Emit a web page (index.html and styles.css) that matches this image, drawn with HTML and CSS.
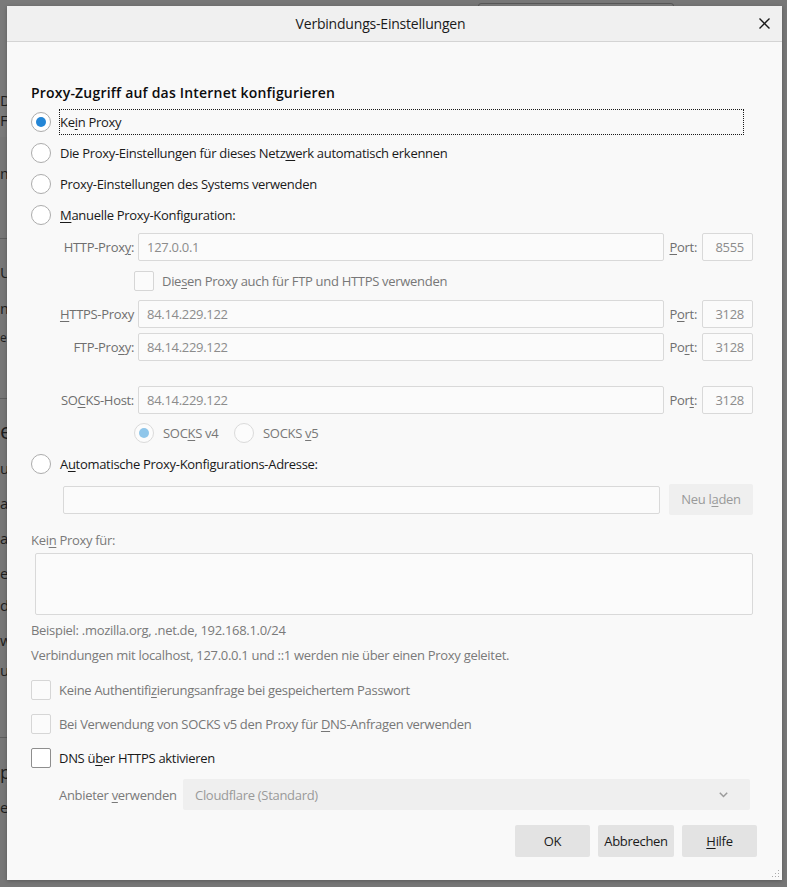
FILE: index.html
```html
<!DOCTYPE html>
<html lang="de">
<head>
<meta charset="utf-8">
<title>Verbindungs-Einstellungen</title>
<link rel="stylesheet" href="styles.css">
</head>
<body>
<div class="page-search"></div>
<div class="page">
  <div class="band">
    <div class="bl b-d">D</div>
    <div class="bl b-fi">Fi</div>
  </div>
  <div class="bl b-m">m</div>
  <div class="sep s2"></div>
  <div class="bl b-u">U</div>
  <div class="bl b-m2">m</div>
  <div class="bl small b-e">e</div>
  <div class="sep s3"></div>
  <div class="bl big b-e2">e</div>
  <div class="bl b-u2">u</div>
  <div class="bl b-ar">ar</div>
  <div class="bl b-a">a</div>
  <div class="bl b-ei">ei</div>
  <div class="bl b-dd">d</div>
  <div class="bl b-w">w</div>
  <div class="bl b-ur">ur</div>
  <div class="sep s4"></div>
  <div class="bl mid b-pj">pj</div>
  <div class="bl b-e3">e</div>
</div>

<div class="dialog">
  <div class="titlebar">
    <div class="title">Verbindungs-Einstellungen</div>
    <div class="close">
      <svg width="11" height="11" viewBox="0 0 11 11"><path d="M0.5 0.5 L10.5 10.5 M10.5 0.5 L0.5 10.5" stroke="#1a1a1a" stroke-width="1.4" fill="none"/></svg>
    </div>
  </div>
  <div class="body">
    <h1 class="heading">Proxy-Zugriff auf das Internet konfigurieren</h1>

    <div class="radio-row first"><span class="radio checked"></span><span class="rlabel focus">Ke<u>i</u>n Proxy</span></div>
    <div class="radio-row"><span class="radio"></span><span class="rlabel">Die Proxy-Einstellungen für dieses Netz<u>w</u>erk automatisch erkennen</span></div>
    <div class="radio-row"><span class="radio"></span><span class="rlabel">Proxy-Einstellungen des Systems verwenden</span></div>
    <div class="radio-row"><span class="radio"></span><span class="rlabel"><u>M</u>anuelle Proxy-Konfiguration:</span></div>

    <div class="proxy-row">
      <span class="plabel">HTTP-Prox<u>y</u>:</span>
      <div class="field">127.0.0.1</div>
      <span class="port-label"><u>P</u>ort:</span>
      <div class="field port">8555</div>
    </div>
    <div class="same-row">
      <span class="check disabled"></span>
      <span class="clabel gray">Die<u>s</u>en Proxy auch für FTP und HTTPS verwenden</span>
    </div>
    <div class="proxy-row">
      <span class="plabel"><u>H</u>TTPS-Proxy</span>
      <div class="field">84.14.229.122</div>
      <span class="port-label">P<u>o</u>rt:</span>
      <div class="field port">3128</div>
    </div>
    <div class="proxy-row">
      <span class="plabel">FTP-Pro<u>x</u>y:</span>
      <div class="field">84.14.229.122</div>
      <span class="port-label">Po<u>r</u>t:</span>
      <div class="field port">3128</div>
    </div>
    <div class="proxy-row socks">
      <span class="plabel">SO<u>C</u>KS-Host:</span>
      <div class="field">84.14.229.122</div>
      <span class="port-label">Por<u>t</u>:</span>
      <div class="field port">3128</div>
    </div>
    <div class="version-row">
      <span class="radio disabled checked"></span>
      <span class="vlabel">SOC<u>K</u>S v4</span>
      <span class="radio disabled"></span>
      <span class="vlabel">SOCKS <u>v</u>5</span>
    </div>

    <div class="radio-row"><span class="radio"></span><span class="rlabel">A<u>u</u>tomatische Proxy-Konfigurations-Adresse:</span></div>
    <div class="auto-row">
      <div class="field"></div>
      <div class="reload">Neu l<u>a</u>den</div>
    </div>

    <div class="noproxy-label">Kei<u>n</u> Proxy für:</div>
    <div class="textarea"></div>
    <div class="hint">Beispiel: .mozilla.org, .net.de, 192.168.1.0/24</div>
    <div class="hint">Verbindungen mit localhost, 127.0.0.1 und ::1 werden nie über einen Proxy geleitet.</div>

    <div class="check-row first"><span class="check disabled"></span><span class="clabel gray">Keine Authentifi<u>z</u>ierungsanfrage bei gespeichertem Passwort</span></div>
    <div class="check-row"><span class="check disabled"></span><span class="clabel gray">Bei Verwendung von SOCKS v5 den Proxy für <u>D</u>NS-Anfragen verwenden</span></div>
    <div class="check-row"><span class="check"></span><span class="clabel">DNS ü<u>b</u>er HTTPS aktivieren</span></div>

    <div class="select-row">
      <span class="slabel">Anbieter <u>v</u>erwenden</span>
      <div class="select">
        <span>Cloudflare (Standard)</span>
        <svg width="9" height="6" viewBox="0 0 9 6"><path d="M0.8 0.8 L4.5 4.5 L8.2 0.8" stroke="#9a9a9a" stroke-width="1.5" fill="none"/></svg>
      </div>
    </div>

    <div class="buttons">
      <div class="btn">OK</div>
      <div class="btn wide">Abbrechen</div>
      <div class="btn"><u>H</u>ilfe</div>
    </div>
  </div>
  <svg class="grip" width="9" height="9" viewBox="0 0 9 9">
    <rect x="7" y="1" width="1" height="1" fill="#aaa"/>
    <rect x="4" y="4" width="1" height="1" fill="#aaa"/>
    <rect x="7" y="4" width="1" height="1" fill="#aaa"/>
    <rect x="1" y="7" width="1" height="1" fill="#aaa"/>
    <rect x="4" y="7" width="1" height="1" fill="#aaa"/>
    <rect x="7" y="7" width="1" height="1" fill="#aaa"/>
  </svg>
</div>
</body>
</html>
```

FILE: styles.css
```css
* { box-sizing: border-box; }
html, body { margin: 0; padding: 0; }
body {
  width: 787px;
  height: 887px;
  overflow: hidden;
  position: relative;
  background: #777777;
  font-family: "Open Sans", "Noto Sans", sans-serif;
  font-size: 13px;
  letter-spacing: -0.3px;
  color: #1a1a1a;
}
u { text-decoration: underline; text-underline-offset: 2px; text-decoration-thickness: 1px; }

/* dimmed page behind the dialog (only its left edge is visible) */
.page { width: 40px; color: #1e1e1e; font-size: 15px; letter-spacing: 0; }
.page-search {
  position: absolute; left: 478px; top: 3px; width: 196px; height: 30px;
  border: 1px solid #585858; border-radius: 3px; background: #7c7c7c;
}
.band { background: #7a7a7a; padding-top: 65px; height: 137px; }
.band .b-d { margin-top: 25px; }
.bl { height: 20px; line-height: 20px; white-space: nowrap; }
.bl.small { font-size: 12px; }
.bl.big { font-size: 22px; height: 30px; line-height: 30px; }
.bl.mid { font-size: 18px; }
.sep { height: 1px; background: #5e5e5e; }
.b-m { margin-top: 26px; }
.s2 { margin-top: 55px; }
.b-u { margin-top: 23px; }
.b-m2 { margin-top: 16px; }
.b-e { margin-top: 10px; }
.s3 { margin-top: 50px; }
.b-e2 { margin-top: 16px; }
.b-u2 { margin-top: 13px; }
.b-ar { margin-top: 15px; }
.b-a { margin-top: 15px; }
.b-ei { margin-top: 15px; }
.b-dd { margin-top: 12px; }
.b-w { margin-top: 15px; }
.b-ur { margin-top: 10px; }
.s4 { margin-top: 57px; }
.b-pj { margin-top: 24px; }
.b-e3 { margin-top: 15px; }

/* dialog window */
.dialog {
  position: absolute; left: 7px; top: 6px; width: 775px; height: 874px;
  background: #f9f9f9;
  box-shadow: 0 1px 4px rgba(0,0,0,0.25);
}
.titlebar {
  height: 36px; background: #f0f0f0; border-bottom: 1px solid #d4d4d4;
  display: flex; align-items: center;
}
.title { flex: 1; text-align: center; font-size: 14px; letter-spacing: -0.2px; color: #1a1a1a; }
.close { width: 20px; margin-right: 8px; display: flex; justify-content: center; align-items: center; }
.close svg { display: block; }

.body { padding: 41px 29px 0 24px; }
.heading {
  margin: 0; font-size: 14px; font-weight: 600; line-height: 20px; letter-spacing: 0.2px; color: #0c0c0d;
}

.radio-row { display: flex; align-items: center; height: 26px; margin-top: 5px; }
.radio-row.first { margin-top: 6px; }
.radio {
  width: 20px; height: 20px; border-radius: 50%; border: 1px solid #acacac;
  background: #fff; flex: none; display: flex; align-items: center; justify-content: center;
}
.radio.checked::after {
  content: ""; width: 10px; height: 10px; border-radius: 50%; background: #2486d6;
}
.radio.disabled { border-color: #dadada; background: #fcfcfc; }
.radio.disabled.checked::after { background: #8fc6ea; }
.rlabel {
  margin-left: 8px; padding: 0; height: 26px; line-height: 24px;
  border: 1px dotted transparent; white-space: nowrap;
}
.rlabel.focus { flex: 1; margin-right: 9px; border-color: #1a1a1a; }

.proxy-row { display: flex; align-items: center; height: 28px; margin-top: 5px; }
.proxy-row.socks { margin-top: 25px; }
.plabel { width: 103px; flex: none; text-align: right; color: #6f6f6f; margin-right: 4px; white-space: nowrap; }
.field {
  flex: 1; height: 28px; border: 1px solid #d9d9d9; background: #fbfbfb;
  border-radius: 2px; padding: 0 8px; line-height: 26px; color: #8c8c8c;
}
.port-label { margin: 0 5px; color: #6f6f6f; }
.field.port { flex: none; width: 51px; text-align: right; }

.same-row { display: flex; align-items: center; height: 28px; margin-top: 6px; padding-left: 103px; }
.check {
  width: 20px; height: 20px; border: 1px solid #8e8e8e; border-radius: 2px;
  background: #fff; flex: none;
}
.check.disabled { border-color: #d6d6d6; background: #fbfbfb; }
.clabel { margin-left: 8px; white-space: nowrap; }
.gray { color: #777; }

.version-row { display: flex; align-items: center; height: 26px; margin-top: 6px; padding-left: 103px; }
.vlabel { margin-left: 9px; width: 71px; color: #777; white-space: nowrap; }

.auto-row { display: flex; align-items: center; height: 31px; margin-top: 7px; padding-left: 32px; }
.reload {
  flex: none; margin-left: 9px; width: 84px; height: 31px; line-height: 31px;
  text-align: center; background: #efefef; color: #9a9a9a; border-radius: 2px;
}

.noproxy-label { margin-top: 15px; line-height: 20px; color: #7a7a7a; }
.textarea {
  margin-top: 3px; margin-left: 4px; height: 62px;
  border: 1px solid #d9d9d9; background: #fbfbfb; border-radius: 2px;
}
.hint { margin-top: 5px; line-height: 20px; color: #7a7a7a; }

.check-row { display: flex; align-items: center; height: 26px; margin-top: 8px; }
.check-row.first { margin-top: 12px; }

.select-row { display: flex; align-items: center; height: 31px; margin-top: 8px; padding-left: 28px; }
.slabel { width: 116px; flex: none; color: #7a7a7a; white-space: nowrap; }
.select {
  flex: 1; margin-left: 8px; margin-right: 3px; height: 31px; background: #efefef;
  border-radius: 2px; color: #9a9a9a; padding: 0 22px 0 12px;
  display: flex; align-items: center; justify-content: space-between;
}

.buttons { display: flex; justify-content: flex-end; gap: 8px; margin-top: 15px; margin-right: -4px; }
.btn {
  width: 75px; height: 32px; line-height: 32px; text-align: center;
  background: #e3e3e3; border-radius: 2px; color: #1a1a1a;
}
.btn.wide { width: 76px; }

.grip { position: absolute; right: 2px; bottom: 2px; }
```
